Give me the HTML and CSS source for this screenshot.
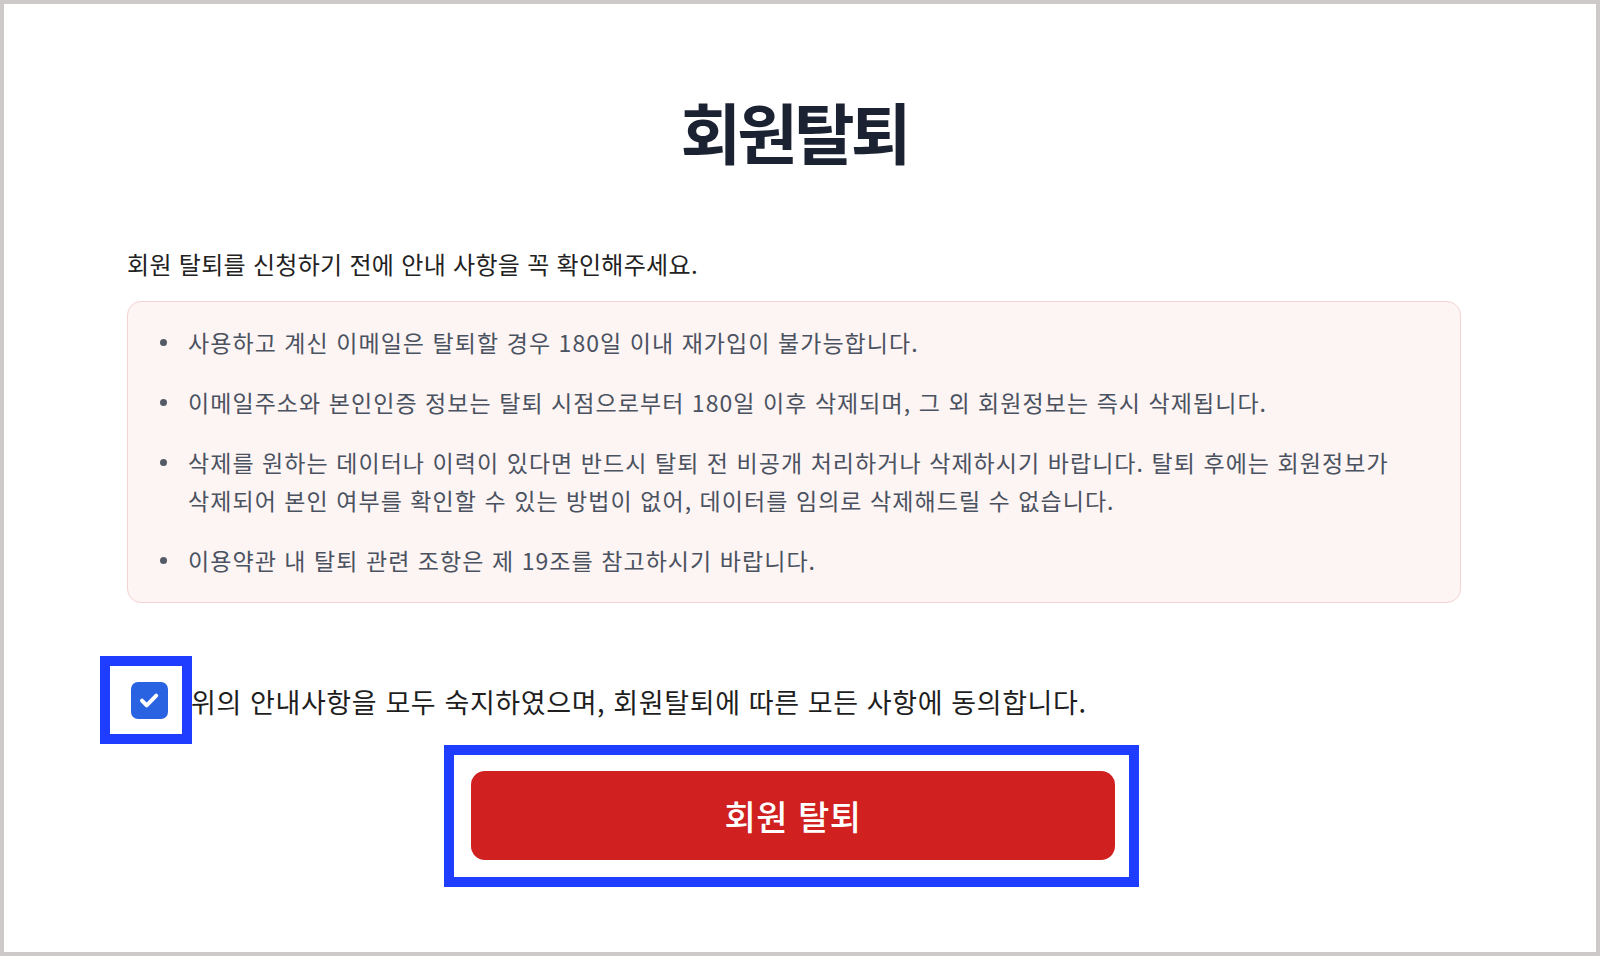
FILE: index.html
```html
<!DOCTYPE html>
<html lang="ko">
<head>
<meta charset="utf-8">
<title>회원탈퇴</title>
<link rel="stylesheet" href="styles.css">
</head>
<body>
<div class="frame">
  <main class="page">
    <h1 class="title">회원탈퇴</h1>
    <p class="intro">회원 탈퇴를 신청하기 전에 안내 사항을 꼭 확인해주세요.</p>
    <div class="notice">
      <ul class="notice-list">
        <li>사용하고 계신 이메일은 탈퇴할 경우 180일 이내 재가입이 불가능합니다.</li>
        <li>이메일주소와 본인인증 정보는 탈퇴 시점으로부터 180일 이후 삭제되며, 그 외 회원정보는 즉시 삭제됩니다.</li>
        <li>삭제를 원하는 데이터나 이력이 있다면 반드시 탈퇴 전 비공개 처리하거나 삭제하시기 바랍니다. 탈퇴 후에는 회원정보가 삭제되어 본인 여부를 확인할 수 있는 방법이 없어, 데이터를 임의로 삭제해드릴 수 없습니다.</li>
        <li>이용약관 내 탈퇴 관련 조항은 제 19조를 참고하시기 바랍니다.</li>
      </ul>
    </div>
    <label class="agree">
      <span class="highlight check-hl">
        <span class="checkbox">
          <svg viewBox="0 0 24 24" width="28" height="28"><path d="M6 12.6l4 4L18.2 8.2" fill="none" stroke="#fff" stroke-width="3.4" stroke-linecap="round" stroke-linejoin="round"/></svg>
        </span>
      </span>
      <span class="agree-text">위의 안내사항을 모두 숙지하였으며, 회원탈퇴에 따른 모든 사항에 동의합니다.</span>
    </label>
    <div class="btn-row">
      <div class="highlight btn-hl">
        <button class="withdraw-btn" type="button">회원 탈퇴</button>
      </div>
    </div>
  </main>
</div>
</body>
</html>
```

FILE: styles.css
```css
* { box-sizing: border-box; }
html, body { margin: 0; padding: 0; }
body {
  font-family: "Noto Sans CJK KR", "Noto Sans", sans-serif;
  background: #ffffff;
}
.frame {
  height: 956px;
  border: 4px solid #cdc9c9;
  background: #ffffff;
  overflow: hidden;
}
.page {
  width: 1334px;
  margin-left: 123px;
  padding-top: 81px;
}
.title {
  margin: 0;
  text-align: center;
  font-size: 66px;
  line-height: 90px;
  font-weight: 700;
  color: #1b2232;
  letter-spacing: -4px;
}
.intro {
  margin: 73px 0 0 0;
  font-size: 24px;
  line-height: 32px;
  color: #222222;
  letter-spacing: 0.3px;
}
.notice {
  margin-top: 21px;
  border: 1px solid #f6d3d3;
  background: #fdf4f4;
  border-radius: 14px;
  padding: 21px 40px 23px 0;
}
.notice-list {
  list-style: none;
  margin: 0;
  padding: 0;
  display: flex;
  flex-direction: column;
  gap: 22px;
}
.notice-list li {
  display: flex;
  align-items: flex-start;
  font-size: 23px;
  line-height: 38px;
  color: #4a5260;
  letter-spacing: 1.05px;
  word-break: keep-all;
}
.notice-list li::before {
  content: "";
  flex: 0 0 7px;
  width: 7px;
  height: 7px;
  border-radius: 50%;
  background: #555b66;
  margin: 16px 21px 0 32px;
}
.agree {
  display: flex;
  align-items: center;
  margin-top: 53px;
  margin-left: -27px;
  cursor: pointer;
}
.highlight {
  border: 10px solid #1f3dff;
  background: #ffffff;
}
.check-hl {
  width: 92px;
  height: 88px;
  display: flex;
  align-items: center;
  justify-content: center;
  padding-left: 6px;
}
.checkbox {
  width: 37px;
  height: 37px;
  border-radius: 7px;
  background: #2a63e2;
  display: flex;
  align-items: center;
  justify-content: center;
}
.agree-text {
  font-size: 27px;
  line-height: 36px;
  color: #1e1e1e;
  letter-spacing: 0.6px;
  margin-left: -1px;
  margin-top: 3px;
}
.btn-row {
  display: flex;
  margin-top: 1px;
  padding-left: 317px;
}
.btn-hl {
  width: 695px;
  height: 142px;
  padding: 16px 14px 17px 17px;
}
.withdraw-btn {
  display: block;
  width: 644px;
  height: 89px;
  border: none;
  border-radius: 14px;
  background: #d02020;
  color: #ffffff;
  font-family: "Noto Sans CJK KR", "Noto Sans", sans-serif;
  font-size: 34px;
  font-weight: 500;
  letter-spacing: 0.5px;
  cursor: pointer;
}
```
